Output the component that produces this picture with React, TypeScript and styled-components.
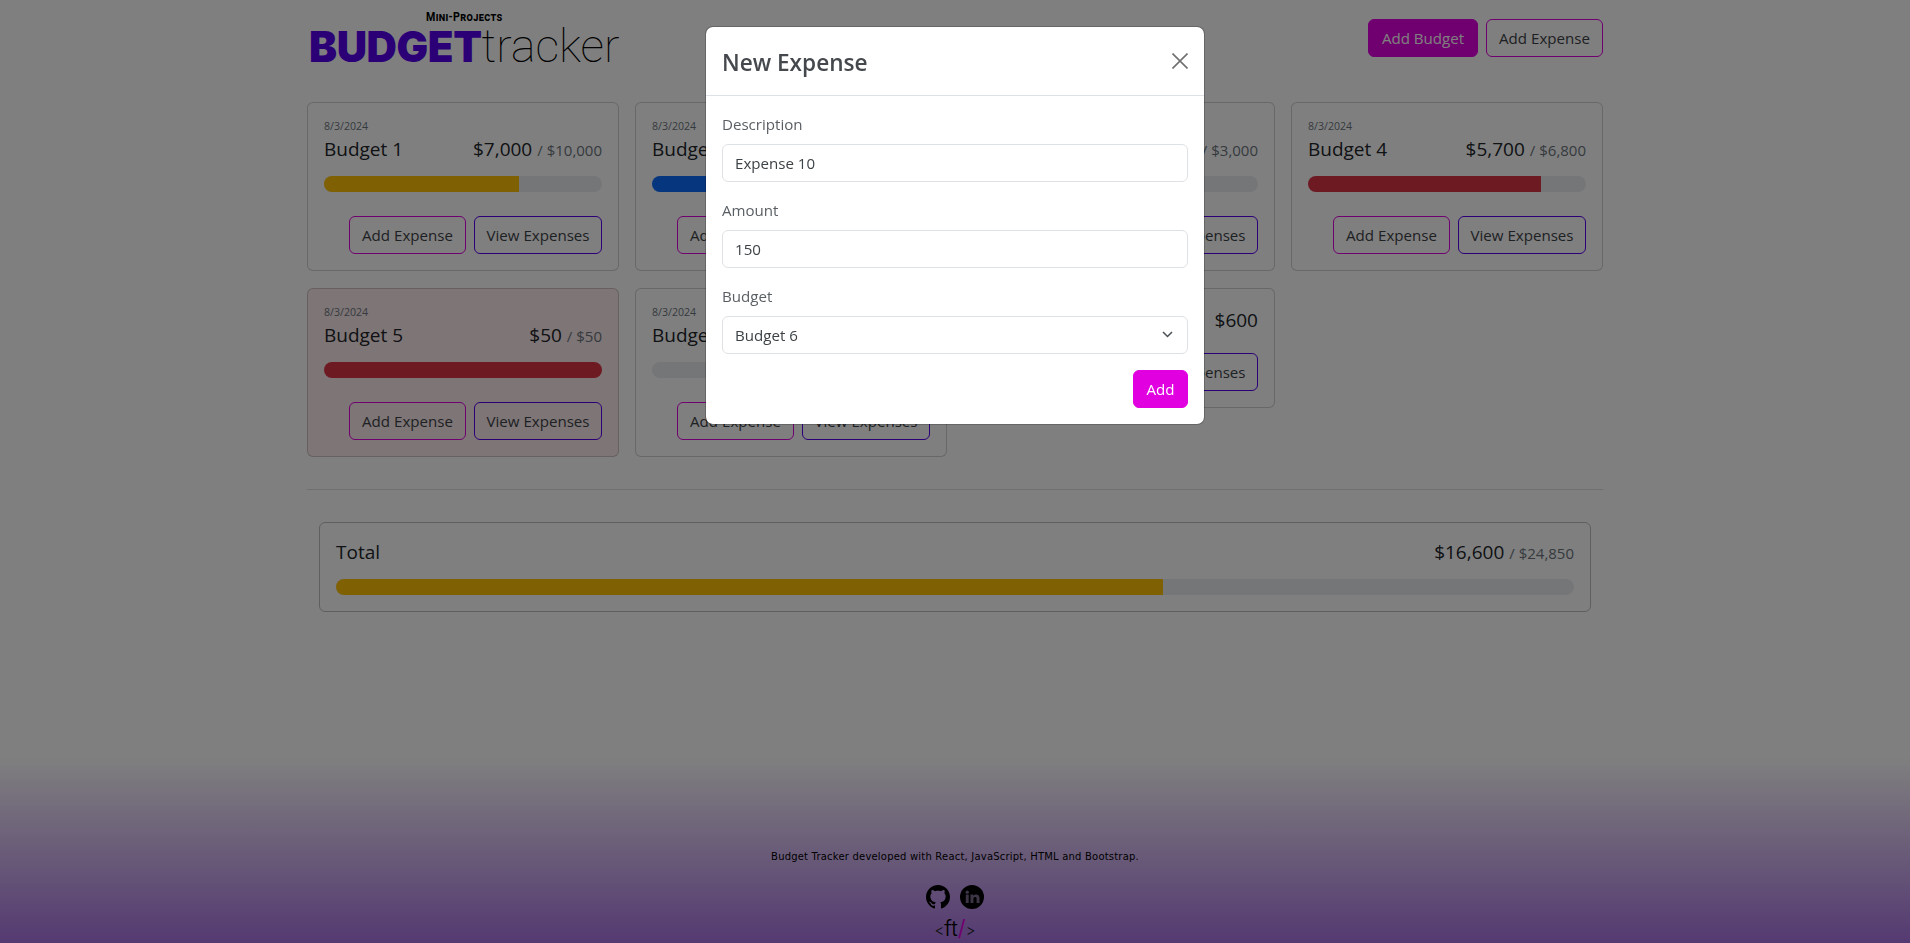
import styled, { createGlobalStyle } from 'styled-components';
import { BsGithub } from 'react-icons/bs';

const GlobalStyle = createGlobalStyle`
  * {
    box-sizing: border-box;
  }
  body {
    margin: 0;
    background-color: white;
    color: #212529;
    font-family: 'Open Sans', 'Noto Sans', sans-serif;
    font-size: 15px;
  }
`;

const Page = styled.div`
  display: flex;
  flex-direction: column;
  height: 943px;
  overflow: hidden;
`;

const Container = styled.main`
  width: 1320px;
  margin: 0 auto;
  padding: 0 12px;
`;

const Header = styled.header`
  display: flex;
  justify-content: space-between;
  align-items: flex-start;
  height: 102px;
`;

const Logo = styled.div`
  display: flex;
  flex-direction: column;
  width: 320px;
  padding-top: 10px;
`;

const LogoTop = styled.span`
  align-self: flex-start;
  margin-left: 119px;
  height: 13px;
  color: #000;
  font-family: 'Roboto', sans-serif;
  font-size: 13px;
  font-weight: 700;
  font-variant: small-caps;
  line-height: 13px;
  letter-spacing: 0.4px;
  transform: scaleX(0.82);
  transform-origin: left center;
`;

const LogoMain = styled.div`
  display: flex;
  align-items: baseline;
  margin-left: 2px;
  line-height: 44px;
  height: 44px;
  padding-top: 1px;
`;

const LogoBold = styled.span`
  color: #5700ef;
  font-family: 'Inter', sans-serif;
  font-size: 42px;
  font-weight: 900;
  letter-spacing: -0.4px;
`;

const LogoThin = styled.span`
  color: #000;
  font-family: 'Roboto', sans-serif;
  font-size: 46.5px;
  font-weight: 100;
`;

const Actions = styled.div`
  display: flex;
  gap: 8px;
  padding-top: 19px;
`;

const Button = styled.button<{ $variant: 'magenta' | 'purple' | 'solid'; $width: number }>`
  width: ${(p) => p.$width}px;
  height: 38px;
  padding: 0;
  border: 1px solid ${(p) => (p.$variant === 'purple' ? '#5700ef' : '#e100df')};
  border-radius: 6px;
  background-color: ${(p) => (p.$variant === 'solid' ? '#e100df' : 'transparent')};
  color: ${(p) => (p.$variant === 'solid' ? 'white' : '#3d4246')};
  font-family: inherit;
  font-size: 15.1px;
  white-space: nowrap;
  cursor: pointer;
`;

const BudgetGrid = styled.section`
  display: grid;
  grid-template-columns: repeat(4, 1fr);
  gap: 17px 16px;
  align-items: start;
`;

const Card = styled.article<{ $over?: boolean }>`
  padding: 16px;
  border: 1px solid rgba(0, 0, 0, 0.18);
  border-radius: 6px;
  background-color: ${(p) => (p.$over ? 'rgba(220, 53, 69, 0.1)' : 'white')};
`;

const DateLabel = styled.div`
  height: 15px;
  color: #6c757d;
  font-size: 10.6px;
  line-height: 15px;
`;

const TitleRow = styled.div`
  display: flex;
  justify-content: space-between;
  align-items: baseline;
  height: 30px;
  line-height: 30px;
`;

const Title = styled.span`
  font-size: 19px;
`;

const Amount = styled.span`
  font-size: 19px;
`;

const Max = styled.span`
  margin-left: 5px;
  color: #6c757d;
  font-size: 15px;
`;

const Track = styled.div`
  height: 16px;
  margin-top: 12px;
  border-radius: 8px;
  background-color: #e9ecef;
  overflow: hidden;
`;

const Fill = styled.div<{ $color: string }>`
  height: 100%;
  background-color: ${(p) => p.$color};
`;

const CardActions = styled.div<{ $plain?: boolean }>`
  display: flex;
  justify-content: flex-end;
  gap: 8px;
  margin-top: ${(p) => (p.$plain ? '18px' : '24px')};
`;

const Divider = styled.hr`
  height: 1px;
  margin: 32px 0;
  border: none;
  background-color: rgba(0, 0, 0, 0.125);
`;

const TotalCard = styled.section`
  margin: 0 12px;
  padding: 14px 16px;
  height: 90px;
  border: 1px solid rgba(0, 0, 0, 0.25);
  border-radius: 6px;
`;

const Footer = styled.footer`
  display: flex;
  flex-direction: column;
  align-items: center;
  height: 186px;
  margin-top: auto;
  padding-top: 93px;
  background: linear-gradient(to bottom, rgba(170, 116, 228, 0), #aa74e4);
`;

const FooterText = styled.p`
  margin: 0;
  height: 14px;
  color: #000;
  font-family: 'DejaVu Sans', sans-serif;
  font-size: 10px;
  line-height: 14px;
  letter-spacing: 0.2px;
`;

const SocialRow = styled.div`
  display: flex;
  gap: 10px;
  margin-top: 21px;
  color: #000;
`;

const Signature = styled.div`
  display: flex;
  align-items: baseline;
  height: 24px;
  margin-top: 7px;
  color: #000;
  font-family: 'Inter', sans-serif;
  font-size: 22px;
  font-weight: 300;
  line-height: 24px;
`;

const SignatureBracket = styled.span`
  color: #222;
  font-size: 15px;
`;

const SignatureSlash = styled.span`
  color: #e100df;
  font-weight: 400;
`;

const Backdrop = styled.div`
  position: fixed;
  inset: 0;
  background-color: rgba(0, 0, 0, 0.5);
`;

const Modal = styled.div`
  position: fixed;
  top: 26px;
  left: 705px;
  width: 500px;
  height: 399px;
  border: 1px solid rgba(0, 0, 0, 0.2);
  border-radius: 8px;
  background-color: white;
  background-clip: padding-box;
`;

const ModalHeader = styled.div`
  display: flex;
  justify-content: space-between;
  align-items: center;
  height: 69px;
  padding: 0 16px;
  border-bottom: 1px solid #dee2e6;
`;

const ModalTitle = styled.h4`
  margin: 2px 0 0;
  color: #45494d;
  font-size: 22.6px;
  font-weight: 600;
`;

const CloseButton = styled.button`
  display: flex;
  padding: 0;
  margin-top: -1px;
  border: none;
  background: none;
  color: #707070;
  cursor: pointer;
`;

const ModalBody = styled.form`
  display: flex;
  flex-direction: column;
  padding: 16px;
`;

const Field = styled.div`
  display: flex;
  flex-direction: column;
  margin-bottom: 16px;
`;

const Label = styled.label`
  height: 24px;
  margin-bottom: 8px;
  color: #5a5f64;
  font-size: 15.1px;
  line-height: 25px;
`;

const Input = styled.input`
  width: 100%;
  height: 38px;
  padding: 0 12px;
  border: 1px solid #dee2e6;
  border-radius: 6px;
  color: #3d4246;
  font-family: inherit;
  font-size: 15.1px;
`;

const SelectWrap = styled.div`
  position: relative;
`;

const Select = styled.select`
  width: 100%;
  height: 38px;
  padding: 0 12px;
  border: 1px solid #dee2e6;
  border-radius: 6px;
  background-color: white;
  color: #3d4246;
  font-family: inherit;
  font-size: 15.1px;
  appearance: none;
`;

const Chevron = styled.svg`
  position: absolute;
  top: 14px;
  right: 15px;
  pointer-events: none;
`;

const ModalFooter = styled.div`
  display: flex;
  justify-content: flex-end;
`;

interface Budget {
  name: string;
  amount: string;
  max?: string;
  percent?: number;
  color?: string;
  date?: boolean;
}

const budgets: Budget[] = [
  { name: 'Budget 1', amount: '$7,000', max: '$10,000', percent: 70, color: '#ffc107', date: true },
  { name: 'Budget 2', amount: '$1,000', max: '$3,000', percent: 33, color: '#0d6efd', date: true },
  { name: 'Budget 3', amount: '$2,250', max: '$3,000', percent: 0, color: '#ffc107', date: true },
  { name: 'Budget 4', amount: '$5,700', max: '$6,800', percent: 83.8, color: '#dc3545', date: true },
  { name: 'Budget 5', amount: '$50', max: '$50', percent: 100, color: '#dc3545', date: true },
  { name: 'Budget 6', amount: '$0', max: '$2,000', percent: 0, color: '#0d6efd', date: true },
  { name: 'Uncategorized', amount: '$600' },
];

const LinkedinCircle = () => (
  <svg width="24" height="24" viewBox="0 0 24 24" aria-label="LinkedIn">
    <circle cx="12" cy="12" r="12" fill="#000" />
    <g fill="#7a6b8c">
      <rect x="5.8" y="9.6" width="2.9" height="8.4" />
      <circle cx="7.25" cy="7.2" r="1.65" />
      <path d="M10.5 9.6h2.8v1.2c.5-.8 1.5-1.4 2.8-1.4 2.5 0 3.4 1.5 3.4 4V18h-2.9v-4c0-1.1-.3-2-1.5-2s-1.7.9-1.7 2v4h-2.9z" />
    </g>
  </svg>
);

const BudgetCard = ({ budget }: { budget: Budget }) => (
  <Card $over={budget.percent === 100}>
    {budget.date && <DateLabel>8/3/2024</DateLabel>}
    <TitleRow>
      <Title>{budget.name}</Title>
      <span>
        <Amount>{budget.amount}</Amount>
        {budget.max && <Max>/ {budget.max}</Max>}
      </span>
    </TitleRow>
    {budget.percent !== undefined && (
      <Track>
        <Fill $color={budget.color ?? '#ffc107'} style={{ width: `${budget.percent}%` }} />
      </Track>
    )}
    <CardActions $plain={budget.percent === undefined}>
      <Button $variant="magenta" $width={117}>Add Expense</Button>
      <Button $variant="purple" $width={128}>View Expenses</Button>
    </CardActions>
  </Card>
);

const App = () => (
  <>
    <GlobalStyle />
    <Page>
      <Container>
        <Header>
          <Logo>
            <LogoTop>Mini-Projects</LogoTop>
            <LogoMain>
              <LogoBold>BUDGET</LogoBold>
              <LogoThin>tracker</LogoThin>
            </LogoMain>
          </Logo>
          <Actions>
            <Button $variant="solid" $width={110}>Add Budget</Button>
            <Button $variant="magenta" $width={117}>Add Expense</Button>
          </Actions>
        </Header>
        <BudgetGrid>
          {budgets.map((budget) => (
            <BudgetCard key={budget.name} budget={budget} />
          ))}
        </BudgetGrid>
        <Divider />
        <TotalCard>
          <TitleRow>
            <Title>Total</Title>
            <span>
              <Amount>$16,600</Amount>
              <Max>/ $24,850</Max>
            </span>
          </TitleRow>
          <Track>
            <Fill $color="#ffc107" style={{ width: '66.8%' }} />
          </Track>
        </TotalCard>
      </Container>
      <Footer>
        <FooterText>Budget Tracker developed with React, JavaScript, HTML and Bootstrap.</FooterText>
        <SocialRow>
          <BsGithub size={24} />
          <LinkedinCircle />
        </SocialRow>
        <Signature>
          <SignatureBracket>&lt;</SignatureBracket>
          ft
          <SignatureSlash>/</SignatureSlash>
          <SignatureBracket>&gt;</SignatureBracket>
        </Signature>
      </Footer>
    </Page>
    <Backdrop />
    <Modal>
      <ModalHeader>
        <ModalTitle>New Expense</ModalTitle>
        <CloseButton type="button" aria-label="Close">
          <svg width="16" height="16" viewBox="0 0 16 16" fill="none" stroke="currentColor" strokeWidth="1.6">
            <path d="M0.5 0.5 15.5 15.5M15.5 0.5 0.5 15.5" />
          </svg>
        </CloseButton>
      </ModalHeader>
      <ModalBody>
        <Field>
          <Label>Description</Label>
          <Input defaultValue="Expense 10" />
        </Field>
        <Field>
          <Label>Amount</Label>
          <Input defaultValue="150" />
        </Field>
        <Field>
          <Label>Budget</Label>
          <SelectWrap>
            <Select defaultValue="Budget 6">
              <option>Budget 6</option>
            </Select>
            <Chevron width="11" height="9" viewBox="0 0 11 9" fill="none" stroke="#4a4f54" strokeWidth="1.5">
              <path d="M1 2 5.5 6.5 10 2" />
            </Chevron>
          </SelectWrap>
        </Field>
        <ModalFooter>
          <Button $variant="solid" $width={55} type="button">Add</Button>
        </ModalFooter>
      </ModalBody>
    </Modal>
  </>
);

export default App;
